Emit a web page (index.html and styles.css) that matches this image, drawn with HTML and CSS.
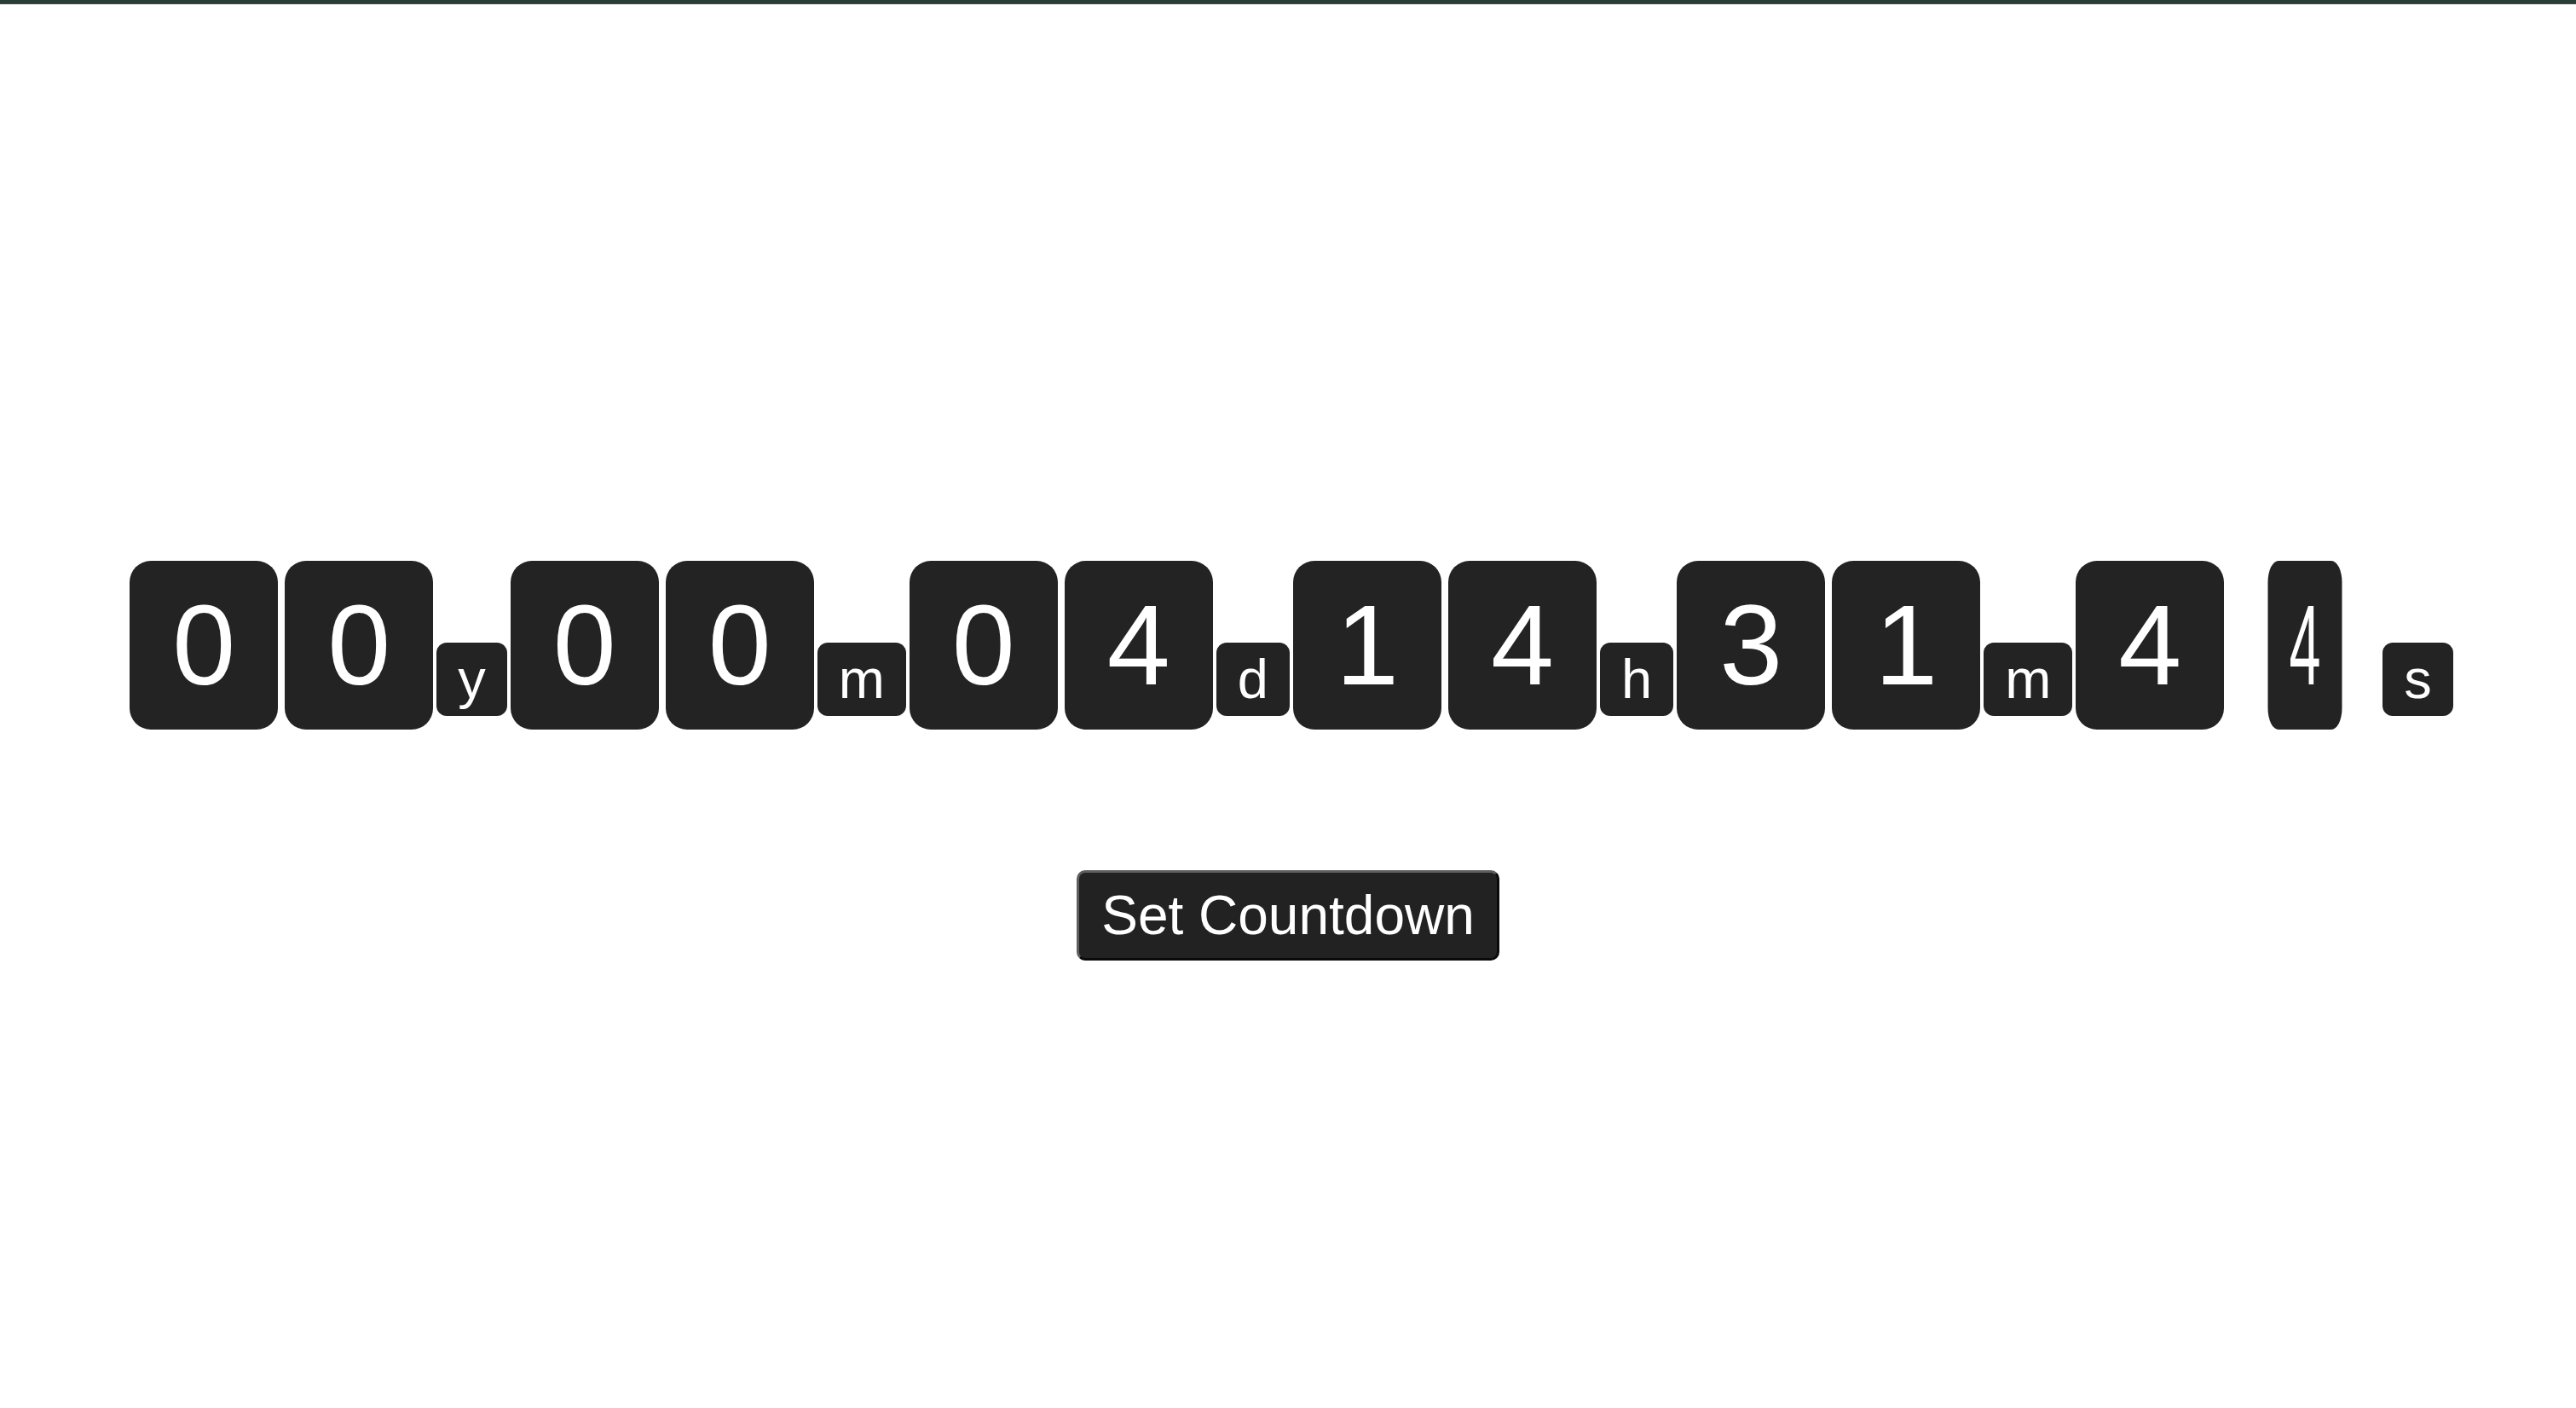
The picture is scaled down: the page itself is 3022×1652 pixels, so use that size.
FILE: index.html
```html
<!DOCTYPE html>
<html lang="en">
<head>
<meta charset="utf-8">
<title>Countdown</title>
<link rel="stylesheet" href="styles.css">
</head>
<body>
<div class="topbar"></div>
<main class="page">
  <div class="clock">
    <div class="unit">
      <span class="digit">0</span><span class="digit">0</span><span class="label">y</span>
    </div>
    <div class="unit">
      <span class="digit">0</span><span class="digit">0</span><span class="label">m</span>
    </div>
    <div class="unit">
      <span class="digit">0</span><span class="digit">4</span><span class="label">d</span>
    </div>
    <div class="unit">
      <span class="digit">1</span><span class="digit">4</span><span class="label">h</span>
    </div>
    <div class="unit">
      <span class="digit">3</span><span class="digit">1</span><span class="label">m</span>
    </div>
    <div class="unit">
      <span class="digit">4</span><span class="digit flipping">4</span><span class="label">s</span>
    </div>
  </div>
  <button class="set-btn" type="button">Set Countdown</button>
</main>
</body>
</html>
```
FILE: styles.css
```css
html, body {
  margin: 0;
  padding: 0;
  background: #ffffff;
  font-family: "Liberation Sans", Arial, sans-serif;
}

.topbar {
  height: 4px;
  background: #2b3d38;
  border-bottom: 1px solid #3d4744;
}

.page {
  display: flex;
  flex-direction: column;
  align-items: center;
  padding-top: 653px;
}

.clock {
  display: flex;
  align-items: flex-end;
  justify-content: center;
  padding-left: 4px;
}

.unit {
  display: flex;
  align-items: flex-end;
}

.digit {
  display: block;
  box-sizing: border-box;
  width: 174px;
  height: 198px;
  margin: 0 4px;
  background: #232323;
  color: #ffffff;
  border-radius: 25px;
  font-size: 133px;
  line-height: 198px;
  text-align: center;
}

.digit.flipping {
  transform: scaleX(0.5);
}

.label {
  display: block;
  height: 86px;
  padding: 0 25px;
  margin-bottom: 16px;
  background: #232323;
  color: #ffffff;
  border-radius: 12px;
  font-size: 65px;
  line-height: 86px;
  text-align: center;
}

.set-btn {
  margin-top: 165px;
  padding: 13px 26px;
  background: #222222;
  color: #ffffff;
  font-family: "Liberation Sans", Arial, sans-serif;
  font-size: 64px;
  line-height: normal;
  border-style: solid;
  border-width: 3px;
  border-color: #5e5e5e #0a0a0a #0a0a0a #5e5e5e;
  border-radius: 10px;
  cursor: pointer;
}
```
